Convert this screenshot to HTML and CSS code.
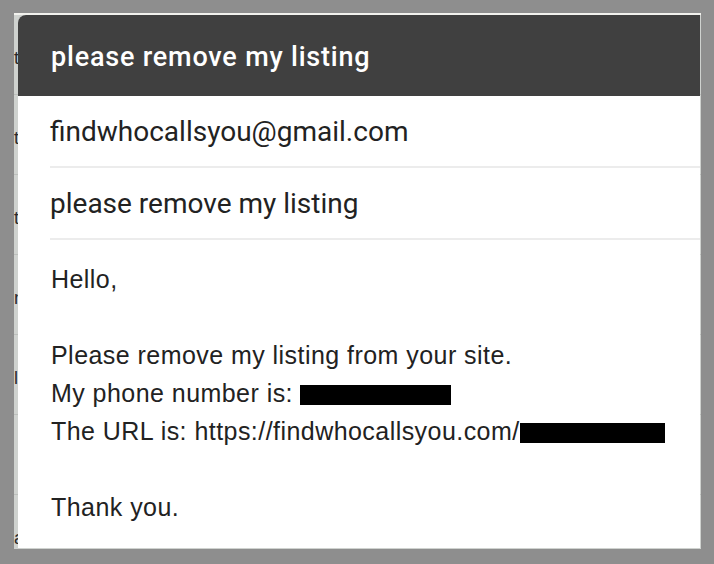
FILE: index.html
```html
<!DOCTYPE html>
<html lang="en">
<head>
    <meta charset="UTF-8">
    <meta name="viewport" content="width=device-width, initial-scale=1.0">
    <title>Contact - Find Who Calls You</title>
    <link rel="stylesheet" href="styles.css">
</head>
<body>
    <div class="page">
        <!-- list behind the overlay, mostly hidden by the dialog -->
        <ul class="behind">
            <li>t</li>
            <li>t</li>
            <li>t</li>
            <li>n</li>
            <li>l</li>
            <li></li>
            <li>a</li>
        </ul>

        <div class="dialog">
            <div class="dialog-title">please remove my listing</div>
            <div class="field">findwhocallsyou@gmail.com</div>
            <div class="field">please remove my listing</div>
            <div class="message">
                <p>Hello,</p>
                <p>&nbsp;</p>
                <p>Please remove my listing from your site.</p>
                <p>My phone number is: <span class="redact phone"></span></p>
                <p>The URL is: https://findwhocallsyou.com/<span class="redact url"></span></p>
                <p>&nbsp;</p>
                <p>Thank you.</p>
            </div>
        </div>
    </div>
</body>
</html>
```

FILE: styles.css
```css
body {
    background-color: #8e8e8e;
    margin: 0;
    padding: 0;
    font-family: "Liberation Sans", Arial, sans-serif;
}

.page {
    position: relative;
    width: 687px;
    height: 534px;
    margin: 13px 0 0 14px;
    border-top: 2px solid #f2f2ee;
    background-color: #cfd2cf;
    overflow: hidden;
}

.behind {
    list-style: none;
    margin: 0;
    padding: 0;
}

.behind li {
    height: 79px;
    line-height: 86px;
    font-size: 18px;
    color: #2a2a2a;
    border-bottom: 1px solid #bcbfbc;
}

.dialog {
    position: absolute;
    top: 0;
    left: 4px;
    right: 1px;
    bottom: 1px;
    background-color: #ffffff;
    border-top-left-radius: 8px;
    overflow: hidden;
}

.dialog-title {
    background-color: #404040;
    color: #ffffff;
    height: 81px;
    line-height: 84px;
    padding-left: 33px;
    font-family: Roboto, sans-serif;
    font-weight: 500;
    font-size: 27px;
    letter-spacing: 0.8px;
}

.field {
    margin-left: 32px;
    height: 70px;
    line-height: 72px;
    border-bottom: 2px solid #ececec;
    font-family: Roboto, sans-serif;
    font-size: 28px;
    color: #222222;
}

.message {
    padding: 20px 0 0 33px;
    color: #222222;
    font-size: 25px;
    letter-spacing: 0.45px;
}

.message p {
    margin: 0;
    height: 38px;
    line-height: 38px;
}

.redact {
    display: inline-block;
    background-color: #000000;
    height: 20px;
    vertical-align: -3px;
}

.phone {
    width: 151px;
}

.url {
    width: 145px;
}
```
